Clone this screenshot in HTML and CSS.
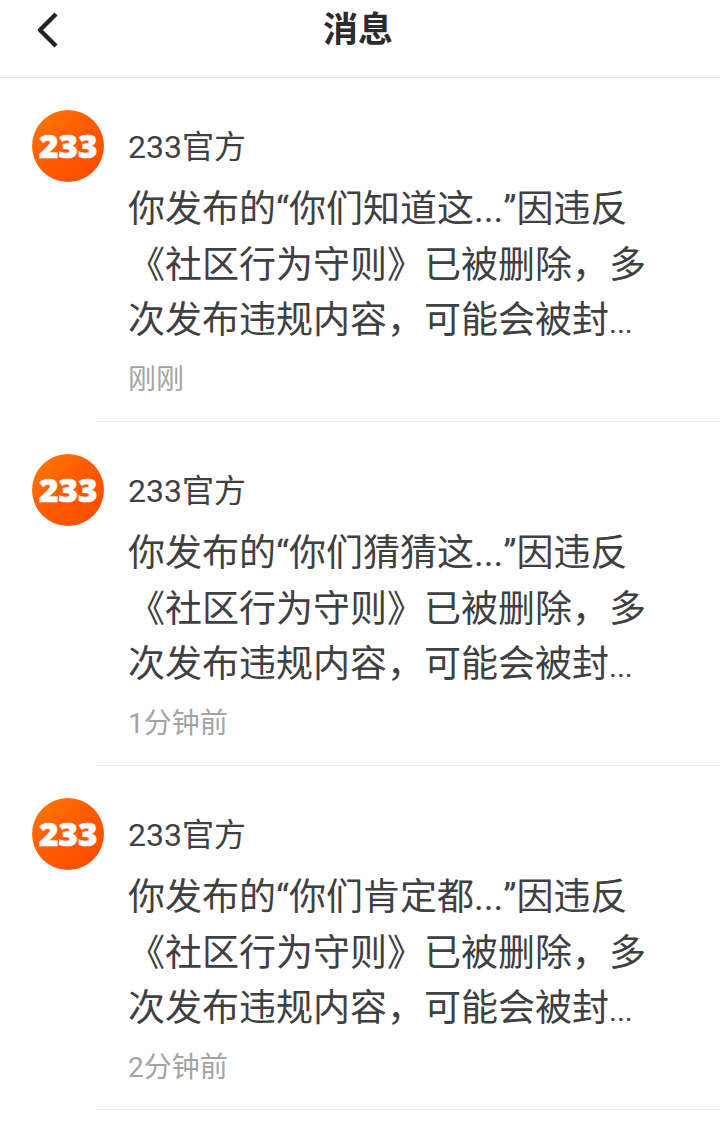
FILE: index.html
```html
<!DOCTYPE html>
<html lang="zh-CN">
<head>
    <meta charset="UTF-8">
    <meta name="viewport" content="width=device-width, initial-scale=1.0">
    <title>消息</title>
    <link rel="stylesheet" href="styles.css">
</head>
<body>

    <header class="header">
        <svg class="back-icon" width="24" height="36" viewBox="0 0 24 36">
            <path d="M21 2 L5 18 L21 34" fill="none" stroke="#222" stroke-width="4.4" stroke-linejoin="round"/>
        </svg>
        <h1>消息</h1>
    </header>

    <section class="message-list">
        <article class="message">
            <div class="avatar"><span>233</span></div>
            <div class="message-body">
                <div class="name">233官方</div>
                <p class="text">你发布的“你们知道这...”因违反《社区行为守则》已被删除，多次发布违规内容，可能会被封<span class="more">...</span></p>
                <div class="time">刚刚</div>
            </div>
        </article>
        <article class="message">
            <div class="avatar"><span>233</span></div>
            <div class="message-body">
                <div class="name">233官方</div>
                <p class="text">你发布的“你们猜猜这...”因违反《社区行为守则》已被删除，多次发布违规内容，可能会被封<span class="more">...</span></p>
                <div class="time">1分钟前</div>
            </div>
        </article>
        <article class="message">
            <div class="avatar"><span>233</span></div>
            <div class="message-body">
                <div class="name">233官方</div>
                <p class="text">你发布的“你们肯定都...”因违反《社区行为守则》已被删除，多次发布违规内容，可能会被封<span class="more">...</span></p>
                <div class="time">2分钟前</div>
            </div>
        </article>
    </section>

</body>
</html>
```

FILE: styles.css
```css
body {
    margin: 0;
    padding: 0;
    background-color: #fff;
    font-family: Roboto, "Noto Sans CJK SC", sans-serif;
    color: #333;
}

.header {
    position: relative;
    height: 77px;
    display: flex;
    align-items: center;
    justify-content: center;
    border-bottom: 1px solid #e6e6e6;
}

.header h1 {
    margin: 0 4px 15px 0;
    font-size: 35px;
    font-weight: 700;
    line-height: 48px;
    color: #2b2b2b;
}

.back-icon {
    position: absolute;
    left: 35px;
    top: 12px;
}

.message {
    position: relative;
    display: flex;
    gap: 24px;
    height: 343px;
    padding-left: 32px;
    border-bottom: 1px solid #eeeeee;
}

.message::after {
    content: "";
    position: absolute;
    left: 0;
    bottom: -1px;
    width: 96px;
    height: 1px;
    background-color: #fff;
}

.avatar {
    flex: none;
    width: 72px;
    height: 72px;
    margin-top: 32px;
    border-radius: 50%;
    background: linear-gradient(135deg, #ff7a00 0%, #ff5a00 50%, #f84a00 100%);
    color: #fff;
    font-family: "Open Sans", sans-serif;
    font-size: 32px;
    font-weight: 800;
    line-height: 72px;
    text-align: center;
}

.avatar span {
    display: inline-block;
    transform: scaleX(1.04);
    -webkit-text-stroke: 0.7px #fff;
}

.message-body {
    flex: 1;
    padding-top: 46px;
}

.name {
    font-size: 32px;
    line-height: 46px;
    color: #404040;
}

.text {
    width: 530px;
    margin: 12px 0 0 0;
    font-size: 37px;
    font-kerning: none;
    line-height: 55.5px;
    color: #404040;
}

.more {
    font-size: 30px;
}

.time {
    margin-top: 9px;
    font-size: 28px;
    line-height: 40px;
    color: #a3a3a3;
}
```
